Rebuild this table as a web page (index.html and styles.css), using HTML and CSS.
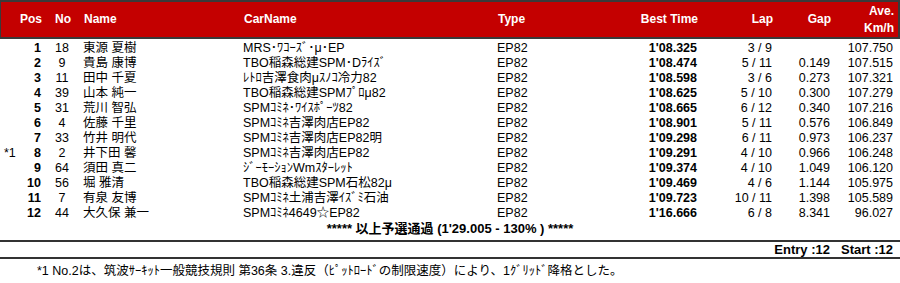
FILE: index.html
```html
<!DOCTYPE html>
<html lang="ja">
<head>
<meta charset="utf-8">
<title>Results</title>
<link rel="stylesheet" href="styles.css">
</head>
<body>
<div class="results">
  <div class="row head">
    <span></span><span class="r">Pos</span><span class="c">No</span><span>Name</span><span>CarName</span><span>Type</span><span class="r">Best Time</span><span class="r">Lap</span><span class="r">Gap</span><span class="r ave">Ave.<br>Km/h</span>
  </div>
  <div class="row"><span></span><span class="r b">1</span><span class="c">18</span><span>東源 夏樹</span><span>MRS･ﾜｺｰｽﾞ･μ･EP</span><span>EP82</span><span class="r b">1'08.325</span><span class="r">3 / 9</span><span class="r"></span><span class="r">107.750</span></div>
  <div class="row"><span></span><span class="r b">2</span><span class="c">9</span><span>貴島 康博</span><span>TBO稲森総建SPM･Dﾗｲｽﾞ</span><span>EP82</span><span class="r b">1'08.474</span><span class="r">5 / 11</span><span class="r">0.149</span><span class="r">107.515</span></div>
  <div class="row"><span></span><span class="r b">3</span><span class="c">11</span><span>田中 千夏</span><span>ﾚﾄﾛ吉澤食肉μｽﾉｺ冷力82</span><span>EP82</span><span class="r b">1'08.598</span><span class="r">3 / 6</span><span class="r">0.273</span><span class="r">107.321</span></div>
  <div class="row"><span></span><span class="r b">4</span><span class="c">39</span><span>山本 純一</span><span>TBO稲森総建SPMﾌﾟﾛμ82</span><span>EP82</span><span class="r b">1'08.625</span><span class="r">5 / 10</span><span class="r">0.300</span><span class="r">107.279</span></div>
  <div class="row"><span></span><span class="r b">5</span><span class="c">31</span><span>荒川 智弘</span><span>SPMｺﾐﾈ･ﾜｲｽﾎﾟｰﾂ82</span><span>EP82</span><span class="r b">1'08.665</span><span class="r">6 / 12</span><span class="r">0.340</span><span class="r">107.216</span></div>
  <div class="row"><span></span><span class="r b">6</span><span class="c">4</span><span>佐藤 千里</span><span>SPMｺﾐﾈ吉澤肉店EP82</span><span>EP82</span><span class="r b">1'08.901</span><span class="r">5 / 11</span><span class="r">0.576</span><span class="r">106.849</span></div>
  <div class="row"><span></span><span class="r b">7</span><span class="c">33</span><span>竹井 明代</span><span>SPMｺﾐﾈ吉澤肉店EP82明</span><span>EP82</span><span class="r b">1'09.298</span><span class="r">6 / 11</span><span class="r">0.973</span><span class="r">106.237</span></div>
  <div class="row"><span class="note">*1</span><span class="r b">8</span><span class="c">2</span><span>井下田 馨</span><span>SPMｺﾐﾈ吉澤肉店EP82</span><span>EP82</span><span class="r b">1'09.291</span><span class="r">4 / 10</span><span class="r">0.966</span><span class="r">106.248</span></div>
  <div class="row"><span></span><span class="r b">9</span><span class="c">64</span><span>須田 真二</span><span>ｼﾞｰﾓｰｼｮﾝWmｽﾀｰﾚｯﾄ</span><span>EP82</span><span class="r b">1'09.374</span><span class="r">4 / 10</span><span class="r">1.049</span><span class="r">106.120</span></div>
  <div class="row"><span></span><span class="r b">10</span><span class="c">56</span><span>堀 雅清</span><span>TBO稲森総建SPM石松82μ</span><span>EP82</span><span class="r b">1'09.469</span><span class="r">4 / 6</span><span class="r">1.144</span><span class="r">105.975</span></div>
  <div class="row"><span></span><span class="r b">11</span><span class="c">7</span><span>有泉 友博</span><span>SPMｺﾐﾈ土浦吉澤ｲｽﾞﾐ石油</span><span>EP82</span><span class="r b">1'09.723</span><span class="r">10 / 11</span><span class="r">1.398</span><span class="r">105.589</span></div>
  <div class="row"><span></span><span class="r b">12</span><span class="c">44</span><span>大久保 兼一</span><span>SPMｺﾐﾈ4649☆EP82</span><span>EP82</span><span class="r b">1'16.666</span><span class="r">6 / 8</span><span class="r">8.341</span><span class="r">96.027</span></div>
  <div class="qualify">***** 以上予選通過 (1'29.005 - 130% ) *****</div>
</div>
<div class="summary"><span>Entry :12</span><span>Start :12</span></div>
<p class="footnote">*1 No.2は、筑波ｻｰｷｯﾄ一般競技規則 第36条 3.違反（ﾋﾟｯﾄﾛｰﾄﾞの制限速度）により、1ｸﾞﾘｯﾄﾞ降格とした。</p>
</body>
</html>
```
FILE: styles.css
```css
body {
  margin: 0;
  font-family: "Liberation Sans", "Noto Sans CJK JP", sans-serif;
  font-size: 12.5px;
  color: #000;
  background: #fff;
}

.row {
  display: grid;
  grid-template-columns: 18px 23px 42px 160px 254px 103px 97px 75px 58px 63px;
  height: 15px;
  line-height: 15px;
  white-space: nowrap;
}

.row.head {
  height: 35px;
  line-height: 17px;
  font-size: 12px;
  align-items: center;
  background: #c40000;
  border: 2px solid #3a3a3a;
  border-left-width: 1px;
  color: #fff;
  font-weight: bold;
  margin-bottom: 2px;
}

.r { text-align: right; }
.c { text-align: center; }
.b { font-weight: bold; }

.note {
  padding-left: 4px;
}

.qualify {
  height: 15px;
  line-height: 15px;
  font-size: 13px;
  text-align: center;
  font-weight: bold;
}

.summary {
  margin-top: 4px;
  border-top: 2px solid #333;
  border-bottom: 2px solid #333;
  height: 15px;
  line-height: 15px;
  font-size: 13px;
  display: flex;
  justify-content: flex-end;
  gap: 11px;
  padding-right: 7px;
  font-weight: bold;
}

.footnote {
  margin: 5px 0 0;
  padding-left: 37px;
  line-height: 15px;
}
```
